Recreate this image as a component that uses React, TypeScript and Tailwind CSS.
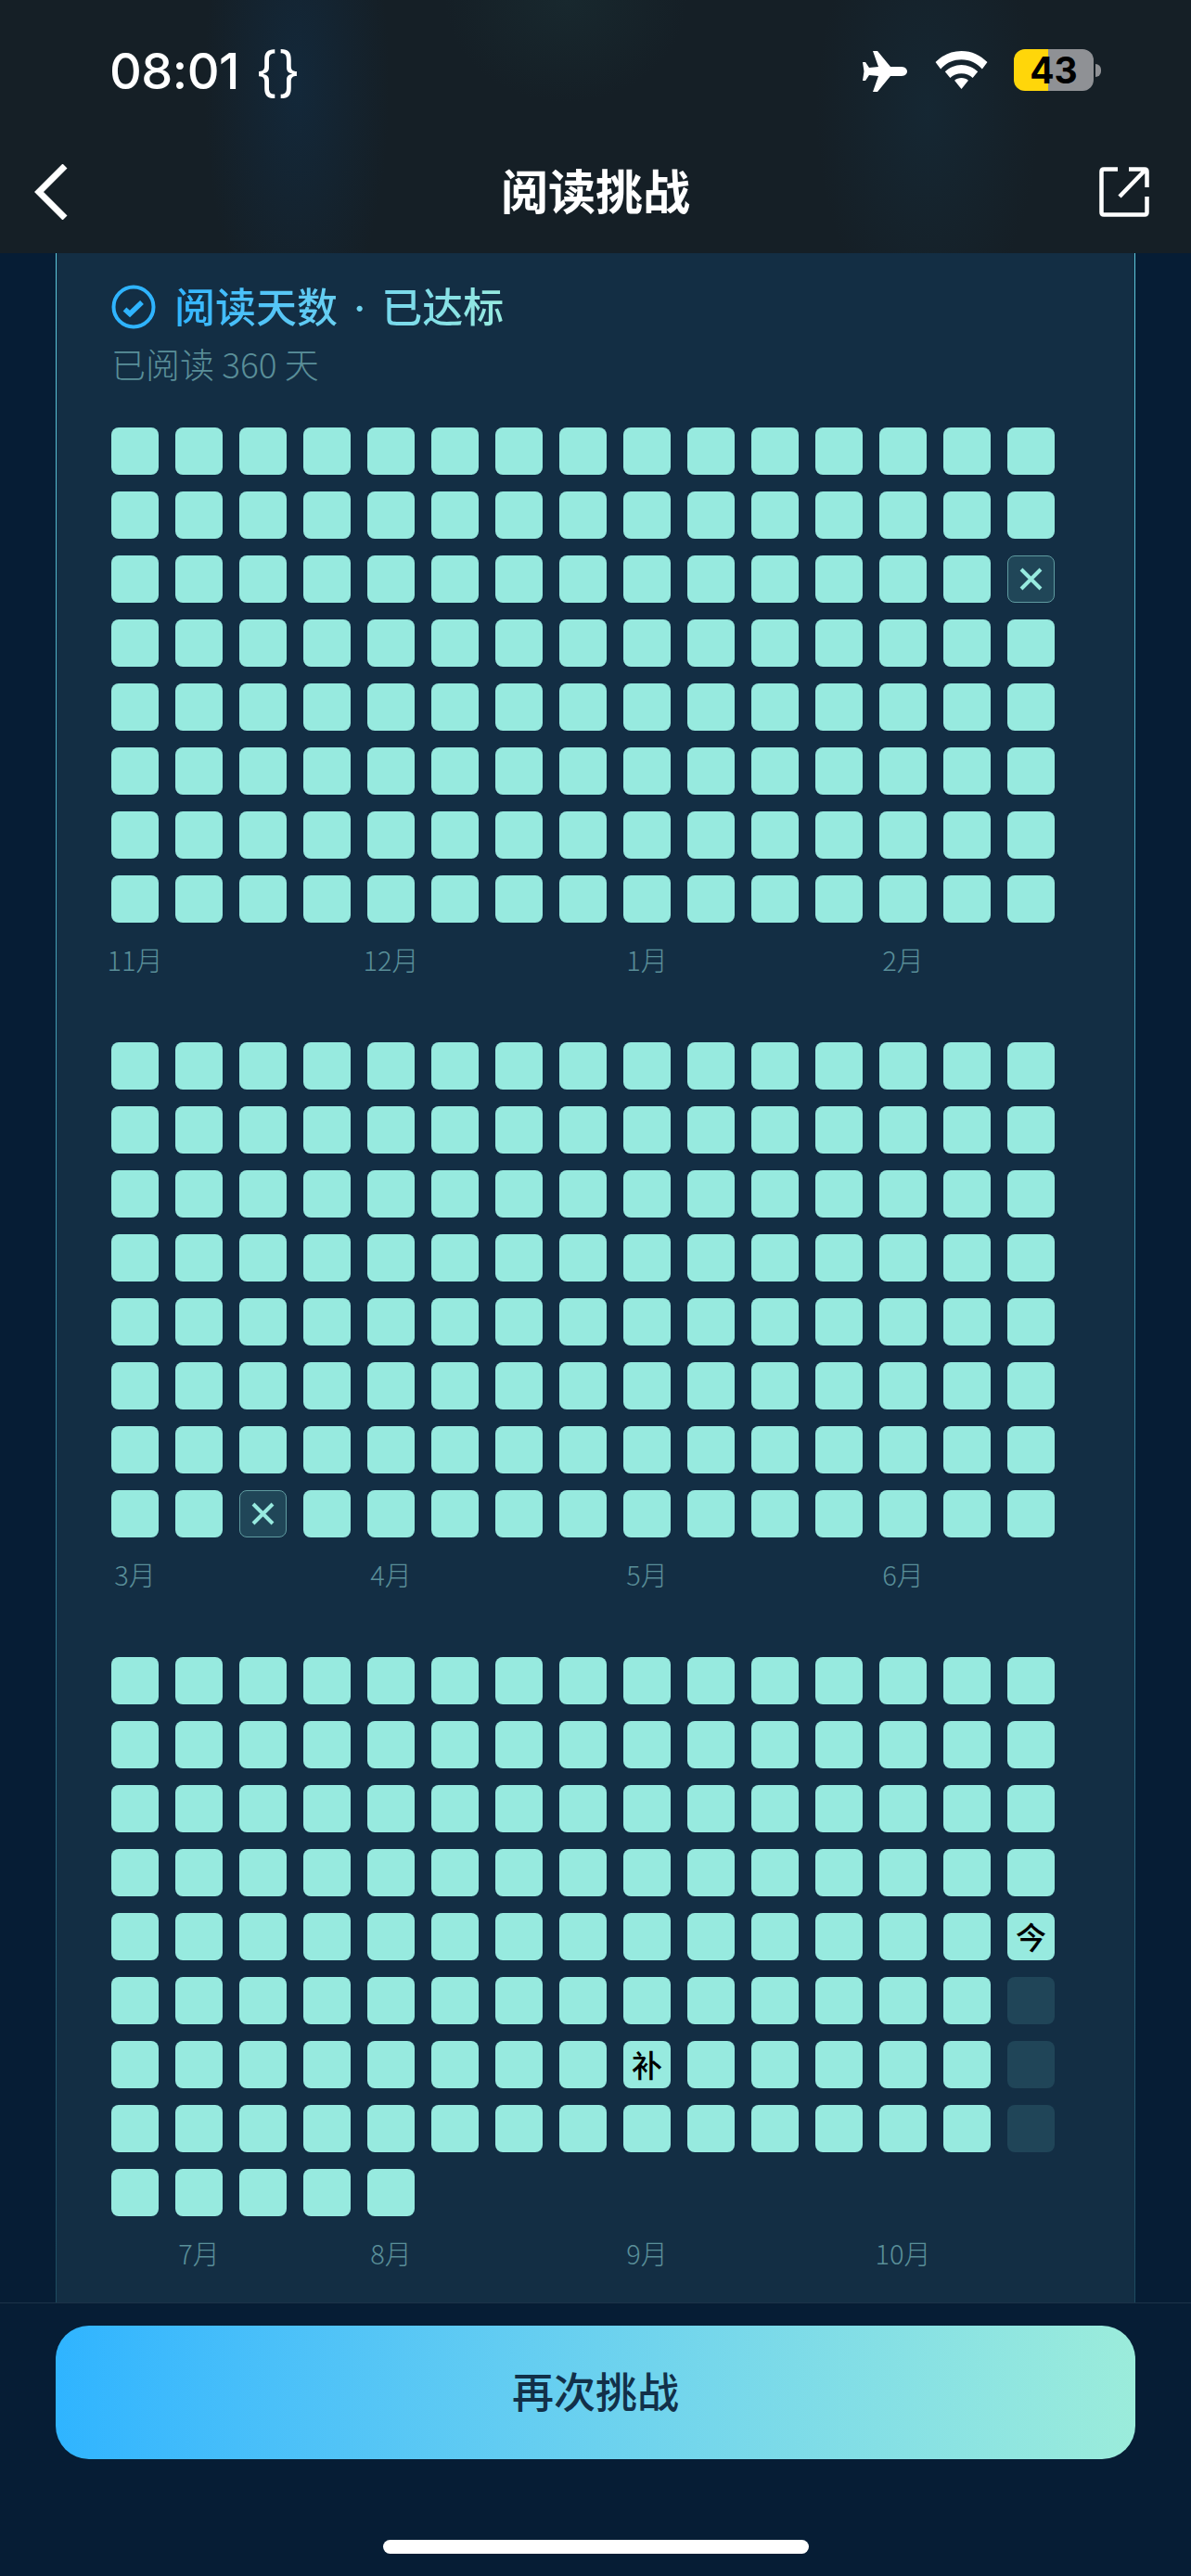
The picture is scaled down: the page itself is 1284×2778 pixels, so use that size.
import React from 'react';

const CJK = "font-['Noto_Sans_CJK_SC','Noto_Sans',sans-serif]";

const columns = Array.from({ length: 15 });

type CellKind = 'done' | 'missed' | 'future' | 'today' | 'makeup';

const Cell = ({ kind }: { kind: CellKind }) => {
  if (kind === 'missed') {
    return (
      <div className="flex h-[51px] w-[51px] items-center justify-center rounded-[8px] border border-[#5f9ba0] bg-[#204658]">
        <svg width="25" height="25" viewBox="0 0 25 25" fill="none" stroke="#97eadf" strokeWidth="4">
          <path d="M2 2 L23 23 M23 2 L2 23" />
        </svg>
      </div>
    );
  }
  if (kind === 'future') return <div className="h-[51px] w-[51px] rounded-[8px] bg-[#204558]" />;
  return (
    <div className={`flex h-[51px] w-[51px] items-center justify-center rounded-[8px] bg-[#97eadf] text-[33px] leading-none font-medium text-black ${CJK}`}>
      {kind === 'today' ? '今' : kind === 'makeup' ? '补' : null}
    </div>
  );
};

const MonthGrid = ({
  rows,
  special = {},
  months,
}: {
  rows: number;
  special?: Record<string, CellKind>;
  months: { label: string; col: string }[];
}) => (
  <div>
    <div className="grid grid-cols-[repeat(15,51px)] gap-[18px]">
      {Array.from({ length: rows }).flatMap((_, r) =>
        columns.map((_, c) => {
          if (r === 8 && c > 4) return null;
          const key = `${r}-${c}`;
          return <Cell key={key} kind={special[key] || 'done'} />;
        })
      )}
    </div>
    <div className="mt-[19px] grid h-[40px] grid-cols-[repeat(15,51px)] gap-x-[18px]">
      {months.map((m) => (
        <div key={m.label} className={`${m.col} row-start-1 flex items-center justify-center whitespace-nowrap text-[29px] leading-none font-light text-[#5a8f99] ${CJK}`}>
          {m.label}
        </div>
      ))}
    </div>
  </div>
);

const StatusBar = () => (
  <div className="flex h-[160px] items-start justify-between pt-[50px] pl-[118px] pr-[97px]">
    <div className="flex items-center gap-[17px] text-[54px] leading-[54px] font-medium tracking-[-0.5px] text-white font-['Inter',sans-serif]">
      <span>08:01</span>
      <span className="text-[58px] leading-[54px] font-normal">{'{}'}</span>
    </div>
    <div className="flex items-start pt-[3px]">
      <svg className="mt-[2px]" width="48" height="44" viewBox="0 0 48 44" fill="#fff">
        <path d="M11 0 L16 0 L30 17 L42 17 C46 17 48 20 48 22 C48 24 46 27 42 27 L30 27 L16 44 L11 44 L17 27 L7 26 L3 32 L0 32 L1.5 22 L0 12 L3 12 L7 18 L17 17 Z" />
      </svg>
      <svg className="ml-[30px] mt-[2px]" width="57" height="41" viewBox="0 0 60 44" fill="#fff">
        <path d="M30 0 C42 0 52 5 60 13 L54 21 C48 14 40 10 30 10 C20 10 12 14 6 21 L0 13 C8 5 18 0 30 0 Z" />
        <path d="M30 16 C37 16 44 19 49 24 L43 31 C40 28 35 26 30 26 C25 26 20 28 17 31 L11 24 C16 19 23 16 30 16 Z" />
        <path d="M30 31 C33 31 36 32 38 34 L30 44 L22 34 C24 32 27 31 30 31 Z" />
      </svg>
      <div className="ml-[28px] flex items-center">
        <div className="flex h-[45px] w-[86px] items-center justify-center rounded-[12px] bg-[linear-gradient(90deg,#ffd60a_37px,#8f9195_37px)] text-[39px] leading-none font-bold text-black font-['Inter',sans-serif]">
          43
        </div>
        <div className="ml-[2px] h-[14px] w-[6px] rounded-r-full bg-[#8f9195]" />
      </div>
    </div>
  </div>
);

const NavBar = () => (
  <div className="relative flex h-[113px] items-start justify-between pl-[37px] pr-[45px] pt-[17px]">
    <svg width="36" height="60" viewBox="0 0 36 60" fill="none" stroke="#fff" strokeWidth="7">
      <path d="M33 2 L5 30 L33 58" strokeLinejoin="miter" />
    </svg>
    <div className={`absolute inset-x-0 top-[7px] text-center text-[51px] leading-[74px] font-bold text-white ${CJK}`}>阅读挑战</div>
    <svg className="mt-[3px]" width="54" height="54" viewBox="0 0 54 54" fill="none" stroke="#fff" strokeWidth="4.5">
      <path d="M20 2.5 H5 Q2.5 2.5 2.5 5 V49 Q2.5 51.5 5 51.5 H49 Q51.5 51.5 51.5 49 V32" />
      <path d="M22 32 L50 3 M32 2.5 H49 Q51.5 2.5 51.5 5 V22" />
    </svg>
  </div>
);

export default function App() {
  return (
    <div className="flex h-[2778px] w-[1284px] flex-col overflow-hidden bg-[#061d35]">
      <header className="h-[273px] shrink-0 bg-[#151f26] bg-[radial-gradient(ellipse_100px_280px_at_320px_90px,#13283a,transparent),radial-gradient(ellipse_130px_110px_at_610px_0px,#18282e,transparent),radial-gradient(ellipse_120px_230px_at_1000px_120px,#152733,transparent)]">
        <StatusBar />
        <NavBar />
      </header>

      <main className="mx-[60px] min-h-0 flex-1 bg-gradient-to-b from-[#5dc8dc] via-[#3a8ea6] to-[#1d4b60] px-px">
        <div className="h-full bg-[#132e44] pl-[59px] pt-[31px]">
          <div className="flex items-center gap-[20px]">
            <svg width="48" height="48" viewBox="0 0 48 48" fill="none" stroke="#2fb4ff">
              <circle cx="24" cy="24" r="21.5" strokeWidth="4" />
              <path d="M14.5 26.5 L20 31.5 L33 19" strokeWidth="5.5" />
            </svg>
            <h1 className={`bg-gradient-to-r from-[#2fb4ff] to-[#97eadf] bg-clip-text text-[44px] leading-[50px] font-medium text-transparent ${CJK}`}>
              阅读天数<span className="mx-[17px] font-['Inter',sans-serif]">·</span>已达标
            </h1>
          </div>
          <p className={`mt-[13px] text-[37px] leading-[44px] font-light text-[#5a8f99] ${CJK}`}>已阅读 360 天</p>

          <div className="mt-[47px] flex flex-col gap-[70px]">
            <MonthGrid
              rows={8}
              special={{ '2-14': 'missed' }}
              months={[
                { label: '11月', col: 'col-start-1' },
                { label: '12月', col: 'col-start-5' },
                { label: '1月', col: 'col-start-9' },
                { label: '2月', col: 'col-start-13' },
              ]}
            />
            <MonthGrid
              rows={8}
              special={{ '7-2': 'missed' }}
              months={[
                { label: '3月', col: 'col-start-1' },
                { label: '4月', col: 'col-start-5' },
                { label: '5月', col: 'col-start-9' },
                { label: '6月', col: 'col-start-13' },
              ]}
            />
            <MonthGrid
              rows={9}
              special={{ '4-14': 'today', '5-14': 'future', '6-14': 'future', '7-14': 'future', '6-8': 'makeup' }}
              months={[
                { label: '7月', col: 'col-start-2' },
                { label: '8月', col: 'col-start-5' },
                { label: '9月', col: 'col-start-9' },
                { label: '10月', col: 'col-start-13' },
              ]}
            />
          </div>
        </div>
      </main>

      <footer className="flex h-[295px] shrink-0 flex-col items-center border-t border-[#1c3349] bg-[#061d35] pt-[24px]">
        <button className={`h-[144px] w-[1164px] rounded-[36px] bg-gradient-to-r from-[#2fb4ff] to-[#9becdb] pb-[5px] text-[45px] font-medium text-[#123049] ${CJK}`}>
          再次挑战
        </button>
        <div className="mt-[87px] h-[15px] w-[459px] rounded-full bg-white" />
      </footer>
    </div>
  );
}
